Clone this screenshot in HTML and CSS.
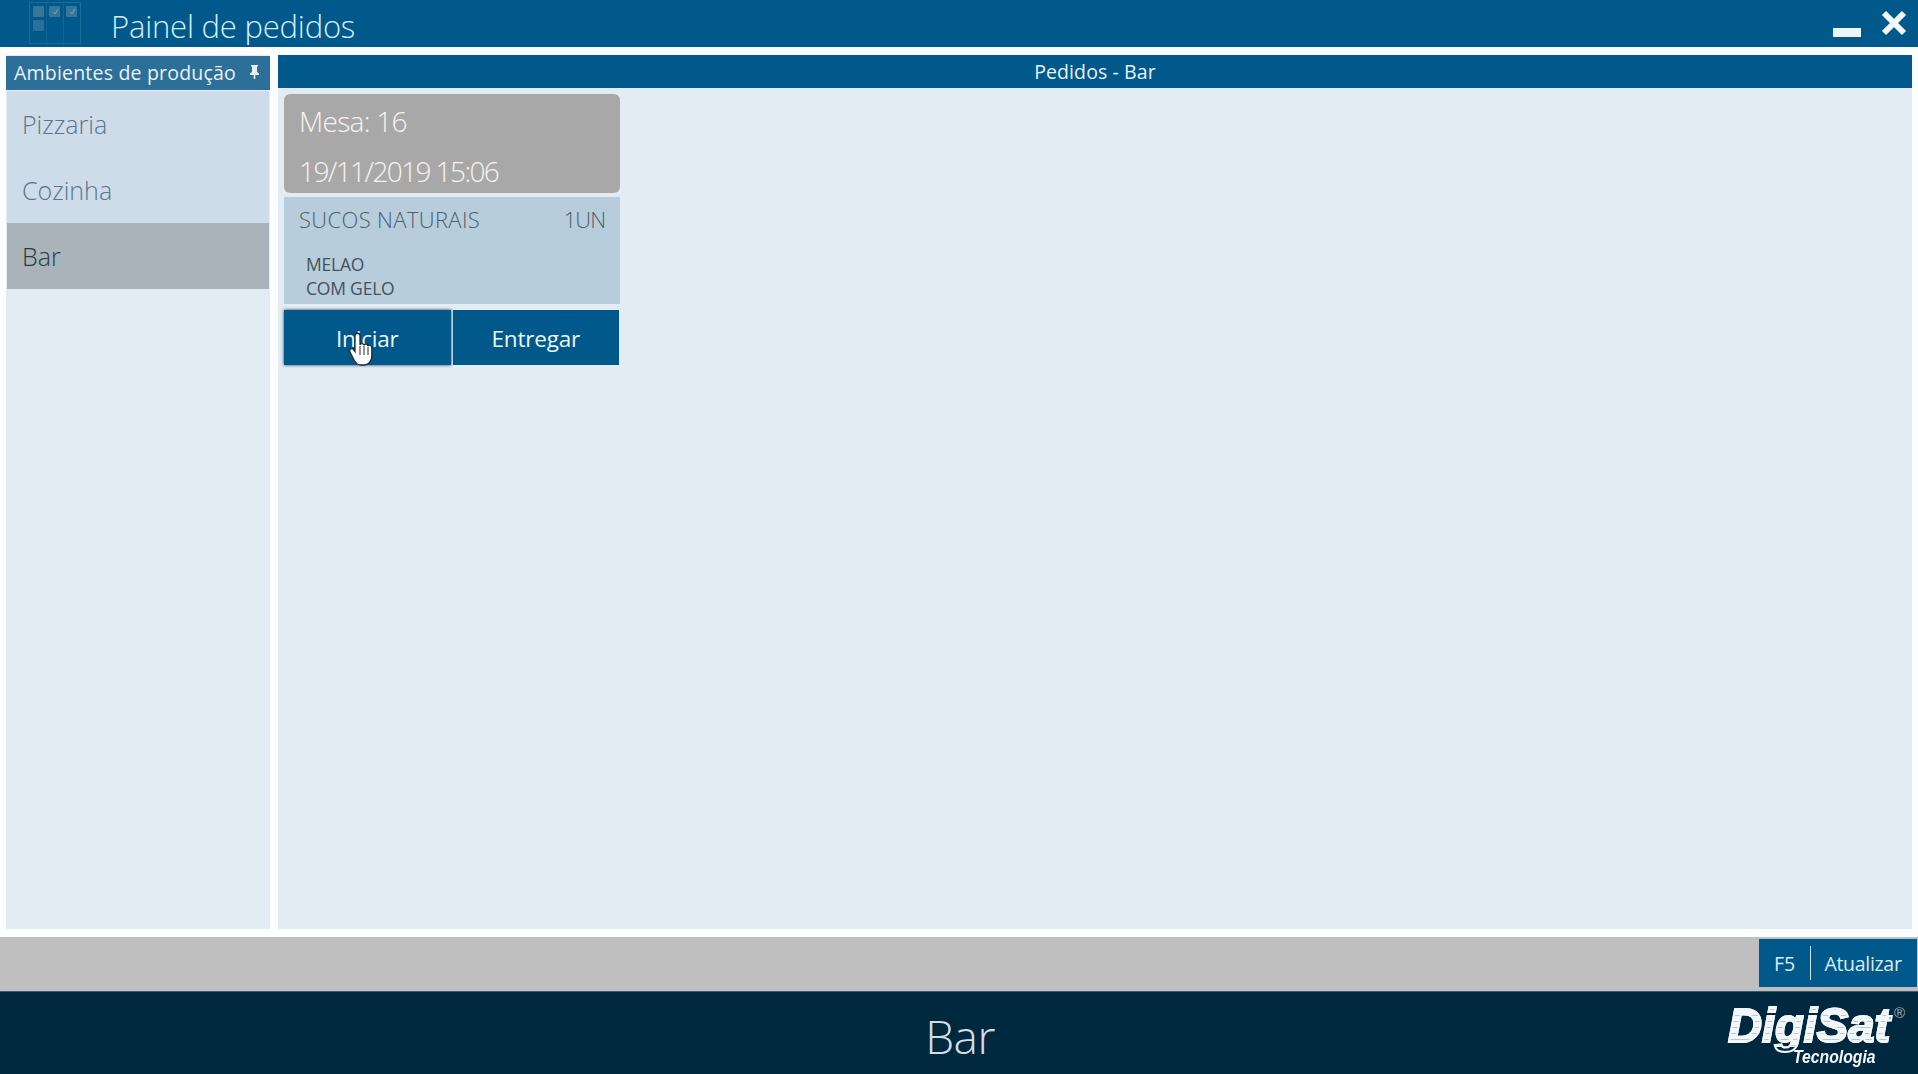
FILE: index.html
```html
<!DOCTYPE html>
<html lang="pt-BR">
<head>
<meta charset="utf-8">
<title>Painel de pedidos</title>
<link rel="stylesheet" href="styles.css">
</head>
<body>
<div class="app">
  <header class="titlebar">
    <svg class="app-icon" width="54" height="46" viewBox="0 0 54 46">
      <rect x="0.500" y="3.500" width="51" height="41" fill="none" stroke="#1a6c99" stroke-width="1"/>
      <path d="M17.500 4v40M34.500 4v40" stroke="#126493" stroke-width="1"/>
      <rect x="4" y="7" width="11" height="11" rx="1" fill="#37759a"/>
      <rect x="20" y="7" width="11" height="11" rx="1" fill="#37759a"/>
      <rect x="37" y="7" width="11" height="11" rx="1" fill="#37759a"/>
      <rect x="4" y="21" width="11" height="11" rx="1" fill="#2a7098"/>
      <path d="M24 13l2 2 3-5M41 13l2 2 3-5" stroke="#7fa5bc" stroke-width="1" fill="none"/>
    </svg>
    <h1 class="app-title">Painel de pedidos</h1>
    <div class="window-controls">
      <svg class="ctl-min" width="28" height="10" viewBox="0 0 28 10"><rect width="28" height="9" fill="#eef6fb"/></svg>
      <svg class="ctl-close" width="28" height="28" viewBox="0 0 28 28"><path d="M4 4l20 20M24 4L4 24" stroke="#f2f8fc" stroke-width="6"/></svg>
    </div>
  </header>

  <main class="workspace">
    <aside class="sidebar">
      <div class="side-head">
        <span>Ambientes de produção</span>
        <svg width="11" height="14" viewBox="0 0 11 14"><path d="M2 0h7v1.500H8V7l2 1.500V10H6.300v4H4.700v-4H1V8.500L3 7V1.500H2z" fill="#e6f0f6"/></svg>
      </div>
      <nav class="side-list">
        <div class="side-item">Pizzaria</div>
        <div class="side-item">Cozinha</div>
        <div class="side-item selected">Bar</div>
      </nav>
    </aside>

    <section class="panel">
      <div class="panel-head">Pedidos - Bar</div>
      <div class="cards">
        <article class="card">
          <div class="card-head">
            <div class="card-line">Mesa: 16</div>
            <div class="card-line card-date">19/11/2019 15:06</div>
          </div>
          <div class="card-body">
            <div class="item-row"><span>SUCOS NATURAIS</span><span class="item-qty">1UN</span></div>
            <div class="item-notes">MELAO<br>COM GELO</div>
          </div>
          <div class="card-actions">
            <button class="btn hover">Iniciar
              <svg class="cursor" width="30" height="36" viewBox="0 0 30 36">
                <path d="M8 3.500c0-3 5-3 5 0V13c0-2 4-2 4 .5 0-2 4-2 4 .8 0-1.600 3.800-1.300 3.800 1.200V24c0 5-3 9-8 9h-3c-3.500 0-5-2-6.500-4.500L3 20c-1.500-2.500 2-4.500 3.500-2.500L8 19.500z" fill="#fff" stroke="#1c2a33" stroke-width="1.300"/>
                <path d="M13 14v9M17 14v9M21 15v8" stroke="#1c2a33" stroke-width="1"/>
              </svg>
            </button>
            <button class="btn">Entregar</button>
          </div>
        </article>
      </div>
    </section>
  </main>

  <div class="actionbar">
    <div class="shortcut"><span class="key">F5</span><span class="key-label">Atualizar</span></div>
  </div>

  <footer class="statusbar">
    <span class="status-text">Bar</span>
    <div class="brand">
      <span class="brand-name">DigiSat</span>
      <span class="brand-reg">®</span>
      <span class="brand-sub">Tecnologia</span>
    </div>
  </footer>
</div>
</body>
</html>
```

FILE: styles.css
```css
* { box-sizing: border-box; }
html, body { margin: 0; height: 100%; }
body {
  background: #fdfeff;
  font-family: "Open Sans", "Noto Sans", sans-serif;
  overflow: hidden;
}
.app { display: flex; flex-direction: column; height: 1074px; }

.titlebar {
  height: 47px;
  flex: none;
  background: #00598a;
  display: flex;
  align-items: center;
  padding-left: 29px;
  overflow: hidden;
}
.app-icon { flex: none; margin-top: -4px; }
.app-title {
  margin: 4px 0 0 28px;
  font-size: 31px;
  font-weight: 300;
  color: #d7ecf7;
  letter-spacing: -0.2px;
}
.window-controls {
  margin-left: auto;
  align-self: flex-start;
  display: flex;
  align-items: flex-end;
  gap: 19px;
  padding: 9px 10px 0 0;
}
.ctl-min { display: block; margin-bottom: -1px; }
.ctl-close { display: block; }

.workspace {
  flex: 1;
  min-height: 0;
  display: flex;
  gap: 8px;
  padding: 8px 6px;
}
.sidebar {
  width: 264px;
  flex: none;
  background: #e3ebf3;
  display: flex;
  flex-direction: column;
}
.side-head {
  height: 34px;
  margin-top: 1px;
  background: #2c6f99;
  color: #eaf3f8;
  font-size: 19.500px;
  display: flex;
  align-items: center;
  justify-content: space-between;
  padding: 0 10px 2px 8px;
  letter-spacing: 0.2px;
  flex: none;
  white-space: nowrap;
}
.side-list { margin: 1px 1px 0; }
.side-item {
  height: 66px;
  display: flex;
  align-items: center;
  padding-left: 15px;
  font-size: 25px;
  font-weight: 300;
  color: #5a768c;
  background: #cddce8;
}
.side-item.selected { background: #a9b3b9; color: #253c4d; }

.panel {
  flex: 1;
  min-width: 0;
  background: #e3ebf3;
  display: flex;
  flex-direction: column;
}
.panel-head {
  height: 33px;
  flex: none;
  background: #00598a;
  color: #e8f2f8;
  font-size: 19.500px;
  display: flex;
  align-items: center;
  justify-content: center;
  letter-spacing: 0.1px;
}
.cards { padding: 6px; display: flex; }
.card { width: 336px; }
.card-head {
  height: 99px;
  background: #a9a8a9;
  border-radius: 6px;
  color: #f6f3ef;
  font-size: 28px;
  font-weight: 300;
  padding: 4px 15px 0;
  letter-spacing: -0.7px;
}
.card-line { height: 50px; line-height: 46px; }
.card-date { letter-spacing: -1.600px; }
.card-body {
  margin-top: 4px;
  height: 107px;
  background: #b7cddc;
  padding: 7px 15px 0 15px;
  color: #4c5f6c;
}
.item-row {
  display: flex;
  justify-content: space-between;
  font-size: 22px;
  font-weight: 300;
  line-height: 30px;
  letter-spacing: 0.35px;
}
.item-qty { letter-spacing: -1px; }
.item-notes {
  margin: 18px 0 0 7px;
  font-size: 17.500px;
  line-height: 24px;
  letter-spacing: -0.2px;
  color: #43525d;
}
.card-actions { display: flex; gap: 2px; margin-top: 6px; padding-right: 1px; }
.btn {
  flex: 1;
  height: 55px;
  border: 0;
  padding: 2px 0 0;
  background: #00598a;
  color: #eef6fa;
  font-family: inherit;
  font-size: 22.500px;
  letter-spacing: -0.2px;
  position: relative;
}
.btn.hover { box-shadow: 0 0 3px #1a3a4f; }
.cursor { position: absolute; left: 63px; top: 22px; }

.actionbar {
  height: 54px;
  flex: none;
  background: #c0bfbf;
  display: flex;
  justify-content: flex-end;
  align-items: flex-end;
  padding: 0 1px 4px 0;
}
.shortcut {
  width: 158px;
  height: 48px;
  background: #00598a;
  color: #dcecf5;
  display: flex;
  align-items: center;
  font-size: 19.500px;
}
.key {
  width: 52px;
  height: 34px;
  display: flex;
  align-items: center;
  justify-content: center;
  border-right: 1px solid #cfe3ef;
}
.key-label { flex: 1; text-align: center; font-weight: 400; letter-spacing: -0.3px; padding-right: 2px; }

.statusbar {
  height: 83px;
  flex: none;
  background: #00283f;
  border-top: 1px solid #3d5b6f;
  display: flex;
  align-items: center;
  justify-content: center;
  position: relative;
  padding-top: 5px;
}
.status-text {
  color: #d4dde3;
  font-size: 46px;
  font-weight: 300;
  letter-spacing: -0.5px;
  margin-left: 2px;
}
.brand {
  position: absolute;
  left: 1728px;
  top: 14px;
  width: 182px;
  height: 60px;
  font-family: "Liberation Sans", sans-serif;
  font-style: italic;
  font-weight: 700;
  color: #f4f7f9;
}
.brand-name {
  position: absolute;
  left: 0;
  top: -2px;
  font-size: 48px;
  line-height: 43px;
  transform: scaleX(0.98);
  transform-origin: left;
  color: transparent;
  -webkit-text-stroke: 2px #f4f7f9;
  background: repeating-linear-gradient(180deg, #f4f7f9 0 5px, #b9c6cf 5px 6px);
  -webkit-background-clip: text;
  background-clip: text;
}
.brand-reg {
  position: absolute;
  left: 166px;
  top: -1px;
  font-size: 15px;
  line-height: 16px;
  font-style: normal;
  font-weight: 400;
  color: #aab6bf;
}
.brand-sub {
  position: absolute;
  left: 65px;
  top: 44px;
  font-size: 17.500px;
  line-height: 14px;
  transform: scaleX(0.9);
  transform-origin: left;
}
```
